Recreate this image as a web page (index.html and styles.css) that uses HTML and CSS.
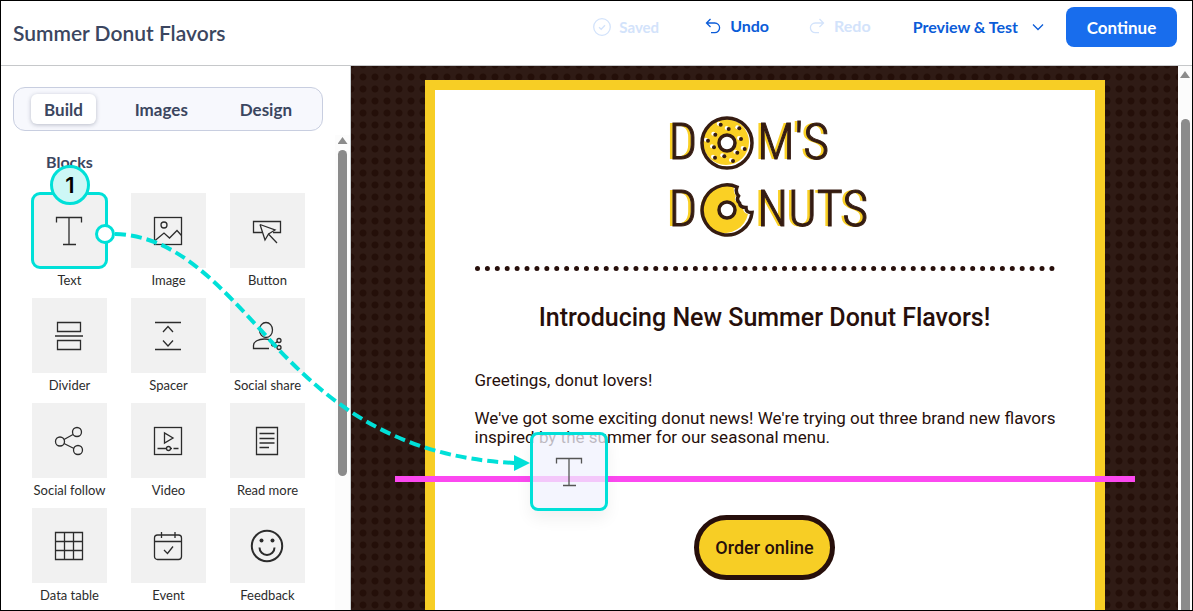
FILE: index.html
```html
<!DOCTYPE html>
<html lang="en">
<head>
<meta charset="UTF-8">
<meta name="viewport" content="width=device-width, initial-scale=1.0">
<title>Summer Donut Flavors</title>
<link rel="stylesheet" href="styles.css">
</head>
<body>
<div class="page">
    <header class="topbar">
        <h1 class="title">Summer Donut Flavors</h1>
        <div class="actions">
            <button class="action saved" disabled>
                <svg width="18" height="18" viewBox="0 0 18 18"><circle cx="9" cy="9" r="8.3"/><path d="M6 9.2l2.2 2.1L12 7.2"/></svg>
                Saved
            </button>
            <button class="action undo">
                <svg width="16" height="18" viewBox="0 0 16 18"><path d="M5.5 2L1.5 6l4 4M1.5 6h8.3a4.7 4.7 0 0 1 0 9.6H6"/></svg>
                Undo
            </button>
            <button class="action redo" disabled>
                <svg width="16" height="18" viewBox="0 0 16 18"><path d="M10.5 2l4 4-4 4M14.5 6H6.2a4.7 4.7 0 0 0 0 9.6H10"/></svg>
                Redo
            </button>
            <button class="action preview">
                Preview &amp; Test
                <svg width="12" height="8" viewBox="0 0 12 8"><path d="M1 1.5l5 5 5-5"/></svg>
            </button>
            <button class="continue">Continue</button>
        </div>
    </header>

    <div class="main">
        <aside class="sidebar">
            <nav class="tabs">
                <button class="tab active">Build</button>
                <button class="tab">Images</button>
                <button class="tab">Design</button>
            </nav>
            <div class="panel">
                <div class="panel-content">
                    <h2 class="panel-title">Blocks</h2>
                    <div class="blocks">
                        <button class="block selected">
                            <span class="tile"><svg width="32" height="32" viewBox="0 0 32 32"><path d="M3.5 7.5v-5h25v5M16 2.5v27M10 29.5h13"/></svg></span>
                            <span class="label">Text</span>
                        </button>
                        <button class="block">
                            <span class="tile"><svg width="32" height="32" viewBox="0 0 32 32"><rect x="2.5" y="2.5" width="27" height="27"/><circle cx="12" cy="10" r="3"/><path d="M2.5 26l9.5-8 5.5 5 7.5-7.5 4.5 5"/></svg></span>
                            <span class="label">Image</span>
                        </button>
                        <button class="block">
                            <span class="tile"><svg width="32" height="32" viewBox="0 0 32 32"><path d="M11 17.5H2.5v-11h27v11H22"/><path d="M9 9.5l5 15.5 3.5-6L26 28M17.5 19l6.5-4L9 9.5"/></svg></span>
                            <span class="label">Button</span>
                        </button>
                        <button class="block">
                            <span class="tile"><svg width="32" height="32" viewBox="0 0 32 32"><path d="M4.5 2.5h23v9h-23zM4.5 20.5h23v9h-23zM2 16h28"/></svg></span>
                            <span class="label">Divider</span>
                        </button>
                        <button class="block">
                            <span class="tile"><svg width="32" height="32" viewBox="0 0 32 32"><path d="M3 2.5h26M3 29.5h26M11 12l5-5.5 5 5.5M11 20.5l5 5.5 5-5.5"/></svg></span>
                            <span class="label">Spacer</span>
                        </button>
                        <button class="block">
                            <span class="tile"><svg width="32" height="32" viewBox="0 0 32 32"><ellipse cx="15" cy="10" rx="6.5" ry="7.5"/><path d="M18 28.5H2.5v-3c0-4 5-6.5 11-6.5 3 0 5.5.5 7.5 1.5M22.5 24.5l4-3M22.5 24.5l4 2.5"/><circle cx="28" cy="20.5" r="2"/><circle cx="28" cy="27.5" r="2"/><circle cx="22" cy="24.5" r="1.5"/></svg></span>
                            <span class="label">Social share</span>
                        </button>
                        <button class="block">
                            <span class="tile"><svg width="32" height="32" viewBox="0 0 32 32"><circle cx="7" cy="16.5" r="4.5"/><circle cx="24" cy="7" r="4.5"/><circle cx="25" cy="25" r="4.5"/><path d="M11 14.5l9-5M11 18.5l10 5"/></svg></span>
                            <span class="label">Social follow</span>
                        </button>
                        <button class="block">
                            <span class="tile"><svg width="32" height="32" viewBox="0 0 32 32"><rect x="2.5" y="2.5" width="27" height="27"/><path d="M12.5 8v10l8.5-5zM5.5 23.5h9M18.5 23.5h1.5M21.5 23.5h5"/><circle cx="16.5" cy="23.5" r="2"/></svg></span>
                            <span class="label">Video</span>
                        </button>
                        <button class="block">
                            <span class="tile"><svg width="32" height="32" viewBox="0 0 32 32"><path d="M5.5 2.5h21v27h-21zM8.5 8.5h15M8.5 13.5h15M8.5 18h15M8.5 22.5h9.5"/></svg></span>
                            <span class="label">Read more</span>
                        </button>
                        <button class="block">
                            <span class="tile"><svg width="32" height="32" viewBox="0 0 32 32"><path d="M2.5 2.5h27v27h-27zM11.5 2.5v27M20.5 2.5v27M2.5 11.5h27M2.5 20.5h27"/></svg></span>
                            <span class="label">Data table</span>
                        </button>
                        <button class="block">
                            <span class="tile"><svg width="32" height="32" viewBox="0 0 32 32"><rect x="2.5" y="5" width="27" height="24.5" rx="3"/><path d="M2.5 11.5h27M9.5 2v6M23 2v6M12 20l3.5 3.5 5.5-7"/></svg></span>
                            <span class="label">Event</span>
                        </button>
                        <button class="block">
                            <span class="tile"><svg class="smiley" width="34" height="34" viewBox="0 0 34 34"><circle cx="17" cy="17" r="15.2"/><path d="M9.5 18.5a7.5 7.5 0 0 0 15 0"/><circle class="eye" cx="11.5" cy="11.5" r="2"/><circle class="eye" cx="22.5" cy="11.5" r="2"/></svg></span>
                            <span class="label">Feedback</span>
                        </button>
                    </div>
                </div>
                <div class="scrollbar panel-scroll">
                    <span class="arrow"></span>
                    <span class="thumb"></span>
                </div>
            </div>
        </aside>

        <main class="canvas">
            <article class="email">
                <div class="logo">
                    <div class="logo-row">
                        <span>D</span>
                        <svg width="54" height="54" viewBox="0 0 54 54">
                            <circle class="dough" cx="26" cy="26" r="23"/>
                            <circle class="ring" cx="27" cy="27" r="25"/>
                            <circle class="hole" cx="27" cy="27" r="8"/>
                            <g class="glaze" transform="translate(-2 -1)">
                                <circle cx="20.7" cy="8.7" r="2"/><circle cx="39.3" cy="12.3" r="2"/><circle cx="28.7" cy="13" r="2"/><circle cx="15.3" cy="18.7" r="2"/><circle cx="41" cy="23" r="2"/><circle cx="8" cy="24.7" r="2"/><circle cx="14" cy="31.3" r="2"/><circle cx="44.7" cy="33" r="2"/><circle cx="37.3" cy="36.7" r="2"/><circle cx="24.3" cy="40.3" r="2"/><circle cx="15" cy="41.7" r="2"/><circle cx="33" cy="45" r="2"/>
                            </g>
                            <g class="sprinkles">
                                <circle cx="20.7" cy="8.7" r="2"/><circle cx="39.3" cy="12.3" r="2"/><circle cx="28.7" cy="13" r="2"/><circle cx="15.3" cy="18.7" r="2"/><circle cx="41" cy="23" r="2"/><circle cx="8" cy="24.7" r="2"/><circle cx="14" cy="31.3" r="2"/><circle cx="44.7" cy="33" r="2"/><circle cx="37.3" cy="36.7" r="2"/><circle cx="24.3" cy="40.3" r="2"/><circle cx="15" cy="41.7" r="2"/><circle cx="33" cy="45" r="2"/>
                            </g>
                        </svg>
                        <span>M'S</span>
                    </div>
                    <div class="logo-row">
                        <span>D</span>
                        <svg width="54" height="54" viewBox="0 0 54 54">
                            <path class="dough" d="M34 4A24 24 0 1 0 48 31Q43 30 43 25Q38 24 38 20Q33 17 36 13Q33 9 34 4z"/>
                            <path class="ring" d="M37 4A25 25 0 1 0 52 29.5Q46 30 46 24.5Q40 24.5 39.5 20Q36 17 38.5 13Q35 9 37 4z"/>
                            <circle class="hole" cx="27" cy="27" r="8"/>
                        </svg>
                        <span>NUTS</span>
                    </div>
                </div>
                <hr class="dots">
                <h2 class="headline">Introducing New Summer Donut Flavors!</h2>
                <p>Greetings, donut lovers!</p>
                <p>We've got some exciting donut news! We're trying out three brand new flavors inspired by the summer for our seasonal menu.</p>
                <a class="order" href="#">Order online</a>
            </article>
        </main>
        <div class="scrollbar page-scroll">
            <span class="arrow"></span>
            <span class="thumb"></span>
        </div>
    </div>

    <!-- drag and drop walkthrough -->
    <div class="drop-line"></div>
    <div class="ghost"><svg width="32" height="32" viewBox="0 0 32 32"><path d="M3.5 7.5v-5h25v5M16 2.5v27M10 29.5h13"/></svg></div>
    <svg class="trail" width="540" height="480" viewBox="0 0 540 480">
        <path class="dash" d="M114 233C174 235 214 279 267 337S389 457 515 462"/>
        <path class="head" d="M513 454l16 8-16 8z"/>
        <circle class="handle" cx="104" cy="233" r="8.5"/>
    </svg>
    <div class="step">1</div>
</div>
</body>
</html>
```
FILE: styles.css
```css
* {
    box-sizing: border-box;
}

body {
    margin: 0;
    font-family: Lato, "Open Sans", sans-serif;
    color: #3b4660;
    background: #fff;
}

button {
    font-family: inherit;
    border: none;
    background: none;
    padding: 0;
    cursor: pointer;
}

svg {
    fill: none;
    stroke: currentColor;
    flex-shrink: 0;
}

.page {
    position: relative;
    display: flex;
    flex-direction: column;
    height: 100vh;
    border: 1px solid #000;
    overflow: hidden;
}

/* top bar */
.topbar {
    display: flex;
    justify-content: space-between;
    align-items: center;
    height: 65px;
    padding: 0 15px 0 12px;
    border-bottom: 1px solid #c6c8ca;
    flex-shrink: 0;
}

.title {
    margin: 0;
    padding-bottom: 2px;
    font-size: 21px;
    font-weight: 600;
}

.actions {
    display: flex;
    align-items: center;
    padding-bottom: 12px;
}

.action {
    display: flex;
    align-items: center;
    gap: 8px;
    color: #0b5cd8;
    font-size: 16px;
    font-weight: 700;
    line-height: 20px;
}

.action svg {
    stroke-width: 1.3;
}

.saved {
    font-size: 15px;
    margin-right: 46px;
}

.undo {
    margin-right: 40px;
}

.redo {
    margin-right: 42px;
}

.undo,
.redo {
    gap: 9px;
    padding-bottom: 3px;
}

.saved,
.redo {
    color: #d3e3fb;
}

.preview {
    gap: 14px;
    margin-right: 22px;
}

.continue {
    width: 111px;
    height: 40px;
    border-radius: 8px;
    background: #186ded;
    color: #fff;
    font-size: 17px;
    font-weight: 700;
}

.main {
    display: flex;
    flex: 1;
    min-height: 0;
}

/* sidebar */
.sidebar {
    display: flex;
    flex-direction: column;
    width: 350px;
    border-right: 1px solid #c9d0d2;
    flex-shrink: 0;
}

.tabs {
    display: flex;
    justify-content: space-between;
    align-items: center;
    height: 44px;
    margin: 21px 27px 4px 12px;
    padding: 0 17px;
    border: 1px solid #c8cee0;
    border-radius: 12px;
    background: #f7f8fd;
    flex-shrink: 0;
}

.tab {
    height: 30px;
    padding: 0 13px;
    border-radius: 6px;
    color: #3b4660;
    font-size: 17px;
    font-weight: 700;
}

.tab.active {
    background: #fff;
    box-shadow: 0 1px 4px rgba(40, 50, 80, 0.3);
}

.panel {
    display: flex;
    flex: 1;
    min-height: 0;
}

.panel-content {
    flex: 1;
    overflow: hidden;
    padding: 17px 0 0 31px;
}

.panel-title {
    margin: 0 0 21px 14px;
    font-size: 16px;
    font-weight: 700;
    line-height: 20px;
}

.blocks {
    display: grid;
    grid-template-columns: repeat(3, 75px);
    gap: 6px 24px;
}

.block {
    display: flex;
    flex-direction: column;
    align-items: center;
    color: #2c2c2c;
}

.tile {
    display: flex;
    align-items: center;
    justify-content: center;
    width: 75px;
    height: 75px;
    padding-right: 1px;
    background: #f1f1f1;
}

.selected .tile {
    outline: 3px solid #00e0d8;
    outline-offset: -2px;
    border-radius: 8px;
}

.tile svg,
.ghost svg {
    stroke-width: 1.3;
}

.tile .smiley {
    stroke-width: 2;
}

.eye {
    fill: #2c2c2c;
    stroke: none;
}

.label {
    font-size: 13px;
    line-height: 24px;
    white-space: nowrap;
}

.scrollbar {
    display: flex;
    flex-direction: column;
    align-items: center;
    background: #fcfcfc;
    flex-shrink: 0;
}

.arrow {
    width: 10px;
    height: 7px;
    background: #8b8b8b;
    clip-path: polygon(50% 0, 100% 100%, 0 100%);
}

.thumb {
    width: 9px;
    border-radius: 5px;
    background: #8b8b8b;
}

.panel-scroll {
    width: 15px;
    padding-top: 2px;
}

.panel-scroll .thumb {
    height: 69%;
    margin-top: 6px;
}

.page-scroll {
    width: 14px;
    padding-top: 5px;
}

.page-scroll .thumb {
    flex: 1;
    margin-top: 41px;
    border-radius: 5px 5px 0 0;
}

/* email preview */
.canvas {
    flex: 1;
    overflow: hidden;
    padding-top: 14px;
    background: #2f1b15 radial-gradient(circle, #240f09 3px, transparent 4px) -6px 5px / 12px 12px;
}

.email {
    max-width: 680px;
    min-height: 100%;
    margin: 0 auto;
    padding: 19px 40px 40px;
    border: 10px solid #f7ce25;
    border-bottom: none;
    background: #fff;
    color: #270f0b;
    font-family: Roboto, "Open Sans", sans-serif;
    line-height: 19px;
}

.logo {
    width: max-content;
    margin: 0 auto;
    padding-left: 8px;
}

.logo-row {
    display: flex;
    align-items: center;
    gap: 3px;
    height: 67px;
    color: #351c12;
    font-family: "Roboto Condensed", Roboto, sans-serif;
    font-size: 50px;
    font-weight: 300;
    line-height: 67px;
    text-shadow: -3px 0 #fad024;
    -webkit-text-stroke: 1px #351c12;
}

.dough {
    fill: #fad024;
    stroke: none;
}

.ring {
    stroke-width: 3.5;
}

.hole {
    fill: #fff;
    stroke-width: 3.5;
}

.glaze {
    fill: #fff;
    stroke: none;
}

.sprinkles {
    fill: #351c12;
    stroke: none;
}

.dots {
    margin: 23px 0 32px;
    border: none;
    border-top: 5px dotted #270f0b;
}

.headline {
    margin: 0 0 38px;
    font-size: 25px;
    font-weight: 500;
    line-height: 30px;
    text-align: center;
}

.email p {
    margin: 0 -10px 19px 0;
    font-size: 17px;
}

.order {
    display: block;
    width: 141px;
    margin: 68px auto 0;
    border: 5px solid #270f0b;
    border-radius: 33px;
    background: #f7ce25;
    color: #270f0b;
    font-size: 18px;
    font-weight: 500;
    line-height: 55px;
    text-align: center;
    text-decoration: none;
}

/* drag and drop overlay */
.drop-line {
    position: absolute;
    top: 475px;
    left: 394px;
    width: 740px;
    height: 6px;
    background: #fc48f0;
}

.ghost {
    position: absolute;
    top: 431px;
    left: 529px;
    display: flex;
    align-items: center;
    justify-content: center;
    width: 78px;
    height: 79px;
    border: 3px solid #00e0d8;
    border-radius: 8px;
    background: rgba(240, 242, 254, 0.75);
    box-shadow: 0 8px 16px rgba(0, 0, 0, 0.06);
    color: #555;
}

.trail {
    position: absolute;
    top: 0;
    left: 0;
    pointer-events: none;
}

.dash {
    stroke: #00e0d8;
    stroke-width: 4;
    stroke-dasharray: 11 5;
}

.head {
    fill: #00e0d8;
    stroke: none;
}

.handle {
    fill: #fff;
    stroke: #00e0d8;
    stroke-width: 3;
}

.step {
    position: absolute;
    top: 164px;
    left: 49px;
    width: 40px;
    height: 40px;
    border: 3px solid #00e0d8;
    border-radius: 50%;
    background: #cdf7f6;
    color: #000;
    font-family: Inter, sans-serif;
    font-size: 22px;
    font-weight: 600;
    line-height: 34px;
    text-align: center;
}
```
